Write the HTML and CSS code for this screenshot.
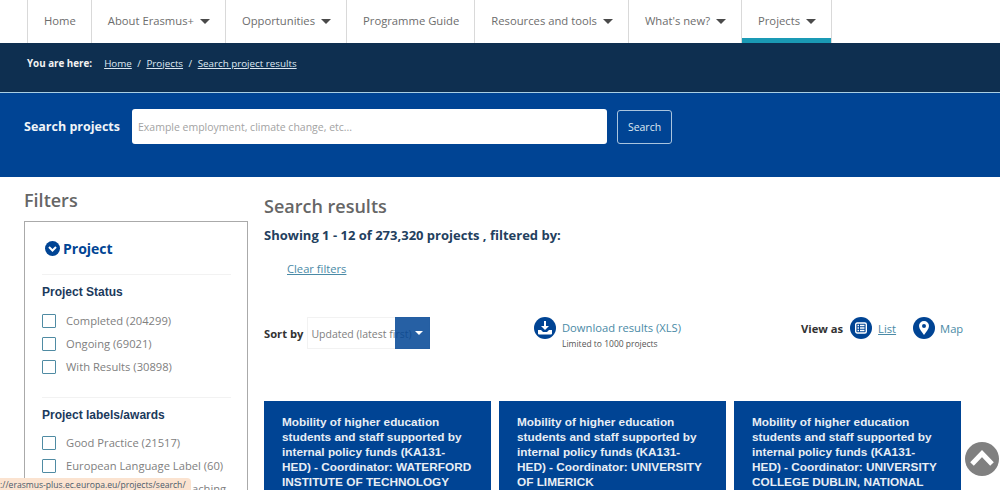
FILE: index.html
```html
<!DOCTYPE html>
<html>
  <head>
    <meta charset="utf-8">
    <title>Search project results</title>
    <link rel="stylesheet" href="styles.css">
  </head>
  <body>
    <nav class="menu">
      <a class="menu-item">Home</a>
      <a class="menu-item">About Erasmus+ <span class="caret"></span></a>
      <a class="menu-item">Opportunities <span class="caret"></span></a>
      <a class="menu-item">Programme Guide</a>
      <a class="menu-item">Resources and tools <span class="caret"></span></a>
      <a class="menu-item">What's new? <span class="caret"></span></a>
      <a class="menu-item active">Projects <span class="caret"></span></a>
    </nav>

    <div class="breadcrumb">
      <strong>You are here:</strong>
      <a>Home</a><span>/</span><a>Projects</a><span>/</span><a>Search project results</a>
    </div>

    <div class="search-band">
      <label class="search-label" for="q">Search projects</label>
      <input id="q" class="search-input" type="text" placeholder="Example employment, climate change, etc...">
      <button class="search-button">Search</button>
    </div>

    <div class="content">
      <aside class="sidebar">
        <h2>Filters</h2>
        <div class="filter-box">
          <div class="filter-head">
            <svg width="15" height="15" viewBox="0 0 15 15"><circle cx="7.5" cy="7.5" r="7.5" fill="#004494"/><path d="M4 6l3.5 3.5L11 6" fill="none" stroke="#fff" stroke-width="2"/></svg>
            Project
          </div>
          <h3>Project Status</h3>
          <label class="check"><i></i>Completed (204299)</label>
          <label class="check"><i></i>Ongoing (69021)</label>
          <label class="check"><i></i>With Results (30898)</label>
          <h3 class="ruled">Project labels/awards</h3>
          <label class="check"><i></i>Good Practice (21517)</label>
          <label class="check"><i></i>European Language Label (60)</label>
          <label class="check cut">aching</label>
        </div>
      </aside>

      <main class="results">
        <h2>Search results</h2>
        <p class="showing">Showing 1 - 12 of 273,320 projects , filtered by:</p>
        <a class="clear">Clear filters</a>

        <div class="toolbar">
          <div class="sort">
            <strong>Sort by</strong>
            <div class="select">Updated (latest first)<span class="select-arrow"></span></div>
          </div>
          <div class="download">
            <span class="round">
              <svg width="14" height="14" viewBox="0 0 14 14"><path d="M6 0h2v5h3L7 9 3 5h3z" fill="#fff"/><path d="M0 9h3l2 2h4l2-2h3v3.500q0 1-1 1H1q-1 0-1-1z" fill="#fff"/></svg>
            </span>
            <div class="download-text">
              <a>Download results (XLS)</a>
              <small>Limited to 1000 projects</small>
            </div>
          </div>
          <div class="view">
            <strong>View as</strong>
            <span class="round">
              <svg width="12" height="12" viewBox="0 0 12 12"><rect x=".7" y="1" width="10.600" height="10" rx="1.500" fill="none" stroke="#fff" stroke-width="1.400"/><path d="M2.500 3.500h1.500M5 3.500h4.500M2.500 6h1.500M5 6h4.500M2.500 8.500h1.500M5 8.500h4.500" stroke="#fff" stroke-width="1.300"/></svg>
            </span>
            <a class="underlined">List</a>
            <span class="round second">
              <svg width="12" height="14" viewBox="0 0 12 14"><path fill-rule="evenodd" d="M6 0a5 5 0 0 1 5 5c0 3-3 6-5 9-2-3-5-6-5-9a5 5 0 0 1 5-5zm0 3a2 2 0 1 0 0 4 2 2 0 0 0 0-4z" fill="#fff"/></svg>
            </span>
            <a class="map">Map</a>
          </div>
        </div>

        <div class="cards">
          <div class="card">Mobility of higher education students and staff supported by internal policy funds (KA131-HED) - Coordinator: WATERFORD INSTITUTE OF TECHNOLOGY</div>
          <div class="card">Mobility of higher education students and staff supported by internal policy funds (KA131-HED) - Coordinator: UNIVERSITY OF LIMERICK</div>
          <div class="card">Mobility of higher education students and staff supported by internal policy funds (KA131-HED) - Coordinator: UNIVERSITY COLLEGE DUBLIN, NATIONAL</div>
        </div>
      </main>
    </div>

    <div class="status-url">://erasmus-plus.ec.europa.eu/projects/search/</div>
    <div class="to-top">
      <svg width="34" height="34" viewBox="0 0 34 34"><path d="M7 22L17 11.500 27 22" fill="none" stroke="#fff" stroke-width="5"/></svg>
    </div>
  </body>
</html>
```

FILE: styles.css
```css
html, body {
  margin: 0;
  height: 490px;
  overflow: hidden;
}
body {
  position: relative;
  font-family: "Open Sans", sans-serif;
  font-size: 12px;
  color: #6b6b6b;
  background: #fff;
}

.menu {
  display: flex;
  height: 43px;
  padding-left: 27px;
  box-sizing: border-box;
}
.menu-item {
  display: flex;
  align-items: center;
  gap: 6px;
  padding: 0 15px 2px 16px;
  border-left: 1px solid #d9d9d9;
  font-size: 11.250px;
  color: #6d6d6d;
  white-space: nowrap;
}
.menu-item:last-child {
  border-right: 1px solid #d9d9d9;
}
.menu-item.active {
  box-shadow: inset 0 -5px 0 #1a9ab5;
}
.caret {
  width: 0;
  height: 0;
  margin-top: 1px;
  border-left: 5px solid transparent;
  border-right: 5px solid transparent;
  border-top: 5px solid #4a4a4a;
}

.breadcrumb {
  display: flex;
  align-items: center;
  height: 50px;
  padding: 0 0 8px 27px;
  box-sizing: border-box;
  background: #0e2f50;
  border-bottom: 1px solid #a9cfe4;
  color: #dfe9f2;
  font-size: 9.800px;
}
.breadcrumb strong {
  margin-right: 12px;
  color: #f2f2f2;
}
.breadcrumb a {
  text-decoration: underline;
}
.breadcrumb span {
  margin: 0 5.500px;
}

.search-band {
  display: flex;
  align-items: flex-start;
  height: 84px;
  padding: 16px 0 0 24px;
  box-sizing: border-box;
  background: #004494;
}
.search-label {
  width: 108px;
  line-height: 36px;
  font-size: 12.500px;
  font-weight: 700;
  color: #f0f4f8;
  white-space: nowrap;
}
.search-input {
  width: 475px;
  height: 35px;
  padding: 0 6px;
  box-sizing: border-box;
  border: 0;
  border-radius: 3px;
  font-family: inherit;
  font-size: 10.500px;
  background: #fff;
}
.search-input::placeholder {
  color: #a3a3a3;
}
.search-button {
  width: 55px;
  height: 34px;
  margin: 1px 0 0 10px;
  border: 1px solid #a9c4de;
  border-radius: 3px;
  background: transparent;
  color: #dfe9f2;
  font-family: inherit;
  font-size: 10.500px;
}

.content {
  display: flex;
  height: 313px;
  padding-left: 24px;
  overflow: hidden;
}
.sidebar {
  width: 224px;
  margin-right: 16px;
  flex: none;
}
.sidebar h2 {
  margin: 11px 0 9px;
  font-size: 18px;
  line-height: 24px;
  font-weight: 600;
  color: #666;
}
.filter-box {
  height: 300px;
  padding: 0 16px 0 17px;
  box-sizing: border-box;
  border: 1px solid #aaa;
}
.filter-head {
  display: flex;
  align-items: center;
  gap: 3px;
  height: 52px;
  padding-left: 3px;
  border-bottom: 1px solid #f2f2f2;
  font-size: 14px;
  font-weight: 700;
  color: #004494;
}
.filter-box h3 {
  margin: 0;
  padding: 9px 0 9px;
  font-family: "Liberation Sans", sans-serif;
  font-size: 12px;
  line-height: 16px;
  color: #1b3a5c;
}
.filter-box h3.ruled {
  margin-top: 19px;
  padding-bottom: 8px;
  border-top: 1px solid #f2f2f2;
}
.check {
  display: flex;
  align-items: center;
  height: 23px;
  font-size: 11.200px;
  color: #808080;
  white-space: nowrap;
}
.check i {
  width: 12px;
  height: 12px;
  margin-right: 10px;
  border: 1px solid #4f8ba3;
  border-radius: 1px;
  flex: none;
}
.check.cut {
  padding-left: 150px;
}

.results {
  width: 696px;
  flex: none;
}
.results h2 {
  margin: 17px 0 0;
  font-size: 18px;
  line-height: 24px;
  font-weight: 600;
  color: #666;
}
.showing {
  margin: 8px 0 0;
  font-size: 13px;
  line-height: 18px;
  font-weight: 700;
  color: #23405e;
}
.clear {
  display: block;
  margin: 17px 0 0 23px;
  font-size: 11.200px;
  line-height: 16px;
  color: #4a8aa6;
  text-decoration: underline;
}
.toolbar {
  display: flex;
  align-items: flex-start;
  margin-top: 40px;
  height: 84px;
  font-size: 11.200px;
  white-space: nowrap;
}
.sort {
  display: flex;
  align-items: center;
  width: 270px;
  gap: 4px;
  flex: none;
}
.sort strong, .view strong {
  color: #333;
}
.select {
  position: relative;
  width: 123px;
  height: 32px;
  padding-left: 3px;
  box-sizing: border-box;
  border: 1px solid #f2f2f2;
  line-height: 32px;
  font-size: 10.500px;
  color: #808080;
  white-space: nowrap;
}
.select-arrow {
  position: absolute;
  top: -1px;
  right: -1px;
  width: 35px;
  height: 32px;
  background: rgba(0, 68, 148, .85);
}
.select-arrow::after {
  content: "";
  position: absolute;
  top: 14px;
  left: 20px;
  border-left: 4px solid transparent;
  border-right: 4px solid transparent;
  border-top: 4px solid #fff;
}
.round {
  display: flex;
  align-items: center;
  justify-content: center;
  width: 22px;
  height: 22px;
  border-radius: 50%;
  background: #004494;
  flex: none;
}
.download {
  display: flex;
  gap: 6px;
  width: 267px;
  flex: none;
}
.download-text {
  padding-top: 3px;
}
.download a, .view a {
  color: #4a8aa6;
}
.download small {
  display: block;
  margin-top: 3px;
  font-size: 8.500px;
  color: #555;
}
.view {
  display: flex;
  align-items: center;
  gap: 7px;
  height: 22px;
}
.view .underlined {
  margin-left: -1px;
  text-decoration: underline;
}
.view .second {
  margin-left: 10px;
}
.view .map {
  margin-left: -2px;
}

.cards {
  display: grid;
  grid-template-columns: repeat(3, 226.500px);
  gap: 8.500px;
}
.card {
  height: 180px;
  padding: 14px 18px;
  box-sizing: border-box;
  background: #004494;
  font-family: "Liberation Sans", sans-serif;
  font-size: 11.800px;
  line-height: 15px;
  font-weight: 700;
  color: #e8eef5;
}

.status-url {
  position: absolute;
  left: 0;
  bottom: 0;
  height: 12px;
  width: 191px;
  border-radius: 0 4px 0 0;
  background: #fbe3d0;
  font-size: 8.600px;
  line-height: 14px;
  color: #4a5a6a;
  white-space: nowrap;
  overflow: hidden;
}
.to-top {
  position: absolute;
  left: 965px;
  top: 442px;
  display: flex;
  align-items: center;
  justify-content: center;
  width: 34px;
  height: 34px;
  border-radius: 50%;
  background: #808080;
}
```
